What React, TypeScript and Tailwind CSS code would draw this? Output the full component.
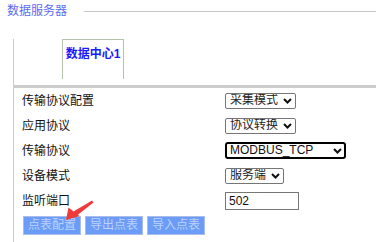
import { ReactNode } from "react";

const Chevron = () => (
  <svg width="9" height="6" viewBox="0 0 9 6" className="pointer-events-none absolute right-[4px] top-1/2 -translate-y-1/2">
    <path d="M1 1 L4.5 4.5 L8 1" fill="none" stroke="#111" strokeWidth="2" />
  </svg>
);

const Select = ({ value, width, focused = false }: { value: string; width: string; focused?: boolean }) => (
  <div className={`relative inline-flex ${width}`}>
    <select
      defaultValue={value}
      className={
        focused
          ? "h-[17px] w-full appearance-none rounded-[3px] border-2 border-black bg-white pl-[3px] text-[12px] leading-[13px] text-[#111] outline-none"
          : "h-[16px] w-full appearance-none rounded-[2px] border border-[#767676] bg-white pl-[4px] text-[12px] leading-[13px] text-[#222] outline-none"
      }
    >
      <option>{value}</option>
    </select>
    <Chevron />
  </div>
);

const Row = ({ label, children }: { label: string; children: ReactNode }) => (
  <div className="flex h-[25px] items-center">
    <span className="w-[203px] text-[12px] text-[#111]">{label}</span>
    {children}
  </div>
);

const ActionButton = ({ text }: { text: string }) => (
  <button className="h-[19px] w-[58px] border border-[#a9bde8] bg-[#6b9cf8] text-[12px] leading-[17px] text-[#bcd2fb]">
    {text}
  </button>
);

const App = () => {
  return (
    <div
      className="relative h-[242px] w-[376px] overflow-hidden bg-white"
      style={{ fontFamily: '"Liberation Sans", "Noto Sans CJK SC", sans-serif' }}
    >
      <div className="flex h-[20px] items-start pl-[7px]">
        <span className="mt-[4px] text-[12px] leading-[14px] text-[#5b6cf0]">数据服务器</span>
        <span className="ml-[17px] mt-[11px] h-px flex-1 bg-[#c4c9c4]" />
      </div>

      <div className="ml-[13px] h-[222px] border-l border-[#c8cdc8]">
        <div className="ml-[48px] mt-[19px] h-[40px] w-[62px] whitespace-nowrap border-x border-t border-[#b3c4ab] pt-[6px] text-center text-[12px] font-bold leading-[16px] text-[#1a1aff]">
          数据中心1
        </div>
        <div className="mt-[6px] h-[3px] bg-[#cccccc]" />

        <div className="pl-[8px]">
          <Row label="传输协议配置">
            <Select value="采集模式" width="w-[71px]" />
          </Row>
          <Row label="应用协议">
            <Select value="协议转换" width="w-[71px]" />
          </Row>
          <Row label="传输协议">
            <Select value="MODBUS_TCP" width="w-[121px]" focused />
          </Row>
          <Row label="设备模式">
            <Select value="服务端" width="w-[59px]" />
          </Row>
          <Row label="监听端口">
            <input
              defaultValue="502"
              className="h-[18px] w-[74px] border border-[#767676] bg-white pl-[3px] text-[12px] text-[#111] outline-none"
            />
          </Row>

          <div className="ml-[1px] mt-[3px] flex gap-[4px]">
            <ActionButton text="点表配置" />
            <ActionButton text="导出点表" />
            <ActionButton text="导入点表" />
          </div>
        </div>
      </div>

      <svg width="376" height="242" className="pointer-events-none absolute left-0 top-0">
        <polygon points="92,200.5 93.5,202.5 77,215.5 73.5,211.5" fill="#f03a3a" />
        <polygon points="66,220 68.5,207.5 79.5,216" fill="#f03a3a" />
      </svg>
    </div>
  );
};

export default App;
